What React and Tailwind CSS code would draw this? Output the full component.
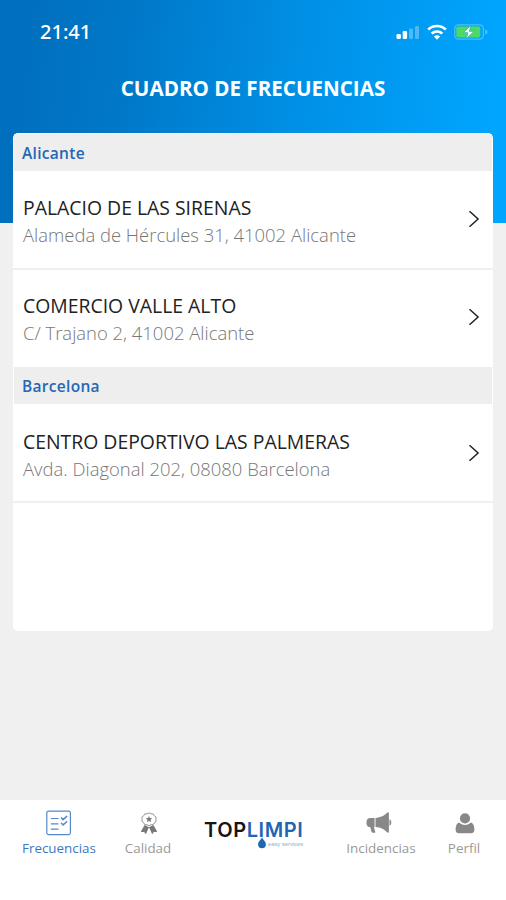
const GROUPS = [
  {
    city: 'Alicante',
    centers: [
      { name: 'PALACIO DE LAS SIRENAS', address: 'Alameda de Hércules 31, 41002 Alicante', pad: 'pt-[3px]' },
      { name: 'COMERCIO VALLE ALTO', address: 'C/ Trajano 2, 41002 Alicante', pad: 'pt-[1px]' },
    ],
  },
  {
    city: 'Barcelona',
    centers: [
      { name: 'CENTRO DEPORTIVO LAS PALMERAS', address: 'Avda. Diagonal 202, 08080 Barcelona', pad: 'pt-[5px]' },
    ],
  },
]

function SignalIcon() {
  return (
    <svg width="24" height="16" viewBox="0 0 24 16" fill="#fff">
      <rect x="0.5" y="10" width="4.4" height="5" rx="1.2" />
      <rect x="6.7" y="7" width="4.4" height="8" rx="1.2" />
      <rect x="13" y="4.5" width="4" height="10.5" rx="1.2" opacity="0.3" />
      <rect x="19" y="2" width="4" height="13" rx="1.2" opacity="0.3" />
    </svg>
  )
}

function WifiIcon() {
  return (
    <svg width="20" height="16" viewBox="0 0 20 16" fill="none" stroke="#fff" strokeWidth="2.7">
      <path d="M1.2 5.6a12.6 12.6 0 0 1 17.6 0" />
      <path d="M4.7 9.6a7.7 7.7 0 0 1 10.6 0" />
      <path d="M10 15.7 6.9 12.5a4.4 4.4 0 0 1 6.2 0z" fill="#fff" stroke="none" />
    </svg>
  )
}

function BatteryIcon() {
  return (
    <svg width="34" height="16" viewBox="0 0 34 16">
      <rect x="0.8" y="0.8" width="28.6" height="14.4" rx="3.6" fill="none" stroke="#fff" strokeOpacity="0.3" strokeWidth="1.2" />
      <path d="M31.2 5.6c1.7.5 2.4 1.3 2.4 2.4s-.7 1.9-2.4 2.4z" fill="#fff" opacity="0.3" />
      <rect x="2.3" y="2.4" width="24" height="11.2" rx="1.8" fill="#4cd964" />
      <path d="M16.8 1.5 9.4 8.7h4.5l-1.6 6 7.9-7.4h-4.8z" fill="#fff" stroke="#24b4cc" strokeWidth="0.8" />
    </svg>
  )
}

function ChecklistIcon() {
  return (
    <svg width="26" height="26" viewBox="0 0 26 26" fill="none" stroke="#5689c9" strokeWidth="1.2" strokeLinecap="round">
      <rect x="0.8" y="1.2" width="23.6" height="23.4" rx="1.8" />
      <path d="M5.3 8.5h6.8M5.3 13.8h6.8M5.3 19.2h6.8" />
      <path d="m15.5 7.9 1.6 1.7 3.6-3.2M15.5 13.2l1.6 1.7 3.6-3.2" strokeWidth="1.5" />
    </svg>
  )
}

function RosetteIcon() {
  return (
    <svg className="ml-px" width="18" height="22" viewBox="0 0 18 22" fill="none" stroke="#777" strokeWidth="1">
      <path d="M5 13.2 1.4 19.6l3-.3 1.2 2.2 3-6.4M13 13.2l3.6 6.4-3-.3-1.2 2.2-3-6.4" fill="#777" />
      <path
        d="m9 .9 2 1 2.2 0 1.1 1.9 1.8 1.3-.2 2.2.2 2.2-1.8 1.3-1.1 1.9-2.2 0-2 1-2-1-2.2 0-1.1-1.9-1.8-1.3.2-2.2-.2-2.2 1.8-1.3 1.1-1.9 2.2 0z"
        fill="#fff"
        stroke="#8a8a8a"
        strokeWidth="0.9"
      />
      <path d="m9 4 .9 2.1 2.4.2-1.8 1.5.6 2.3L9 8.900l-2.100 1.200.6-2.300-1.800-1.500 2.400-.2z" fill="#777" stroke="none" />
    </svg>
  )
}

function MegaphoneIcon() {
  return (
    <svg className="-ml-[5px]" width="26" height="22" viewBox="0 0 26 22" fill="#888">
      <path d="M4.2 6h4.4v9H7.9l1.5 5.6c-1.8.6-3.7.2-4.1-1.3L4.2 15H3.4C1.5 15 .4 13 .4 10.5S1.8 6 4.2 6z" />
      <path d="M9.5 6C14.5 5.8 18.8 3.4 21.3.6h1.6v19.8h-1.6c-2.5-2.9-6.8-5.3-11.8-5.5z" />
      <path d="M23.5 7.3c1.3.5 1.8 1.6 1.8 3.2s-.5 2.7-1.8 3.2z" />
    </svg>
  )
}

function PersonIcon() {
  return (
    <svg className="ml-[2px]" width="20" height="21" viewBox="0 0 20 21" fill="#888">
      <circle cx="10" cy="5.4" r="5.1" />
      <path d="M4.2 9.6C5.5 11.2 7.6 12 10 12s4.5-.8 5.8-2.4c2.3.7 3.6 3.2 3.6 7.1 0 2.3-1.4 3.6-3.6 3.6H4.2C2 20.3.6 19 .6 16.7.6 12.8 1.9 10.3 4.2 9.6z" />
    </svg>
  )
}

function Chevron() {
  return (
    <svg className="shrink-0" width="12" height="18" viewBox="0 0 12 18" fill="none" stroke="#222" strokeWidth="1.5">
      <path d="m1.5 1.2 8.6 7.8-8.6 7.8" />
    </svg>
  )
}

function Tab({ label, icon, active, className = '' }) {
  return (
    <button type="button" className={`flex flex-col items-center ${active ? 'text-[#3c77c2]' : 'text-[#999]'} ${className}`}>
      <span className="flex h-[26px] items-center">{icon}</span>
      <span className="mt-[3px] text-[13.4px] leading-[18px] whitespace-nowrap">{label}</span>
    </button>
  )
}

function Logo() {
  return (
    <div className="mt-[10px] flex w-[100px] flex-col">
      <div className="font-['Inter',sans-serif] text-[20px] leading-[20px] font-semibold tracking-[0.6px] whitespace-nowrap text-[#151515]">
        TOP<span className="text-[#1f66b5]">LIMPI</span>
      </div>
      <div className="-mt-[3px] flex items-start pl-[53px]">
        <svg className="shrink-0" width="10" height="12" viewBox="0 0 10 12" fill="#1f66b5">
          <path d="M5 .3c.8 2.2 3.9 4.200 3.900 7A3.900 3.900 0 0 1 1.100 7.300C1.100 4.500 4.200 2.500 5 .3z" />
        </svg>
        <span className="mt-[4px] ml-[1px] font-['Liberation_Sans',sans-serif] text-[6px] leading-[7px] tracking-[-0.1px] whitespace-nowrap text-[#8eb0d8]">
          easy services
        </span>
      </div>
    </div>
  )
}

export default function App() {
  return (
    <div className="flex h-[900px] w-[506px] flex-col overflow-hidden bg-[#f0f0f0] font-['Open_Sans',sans-serif]">
      <header className="h-[223px] shrink-0 bg-[linear-gradient(97deg,#006fbd_4%,#0078c8_25%,#0090e6_58%,#00a5fe_95%)] text-white">
        <div className="flex h-[64px] items-center justify-between pr-[18px] pl-[40px]">
          <span className="font-['Noto_Sans',sans-serif] text-[20px] font-medium">21:41</span>
          <div className="flex items-center gap-[7px]">
            <SignalIcon />
            <WifiIcon />
            <BatteryIcon />
          </div>
        </div>
        <h1 className="pt-[10px] text-center text-[20.6px] leading-[28px] font-bold">CUADRO DE FRECUENCIAS</h1>
      </header>

      <main className="z-10 mx-[13px] -mt-[90px] h-[498px] shrink-0 overflow-hidden rounded-[5px] bg-white">
        {GROUPS.map(group => (
          <section key={group.city}>
            <h2 className="mx-px mt-px flex h-[37px] items-center bg-[#eee] px-2 pt-[3px] text-[15.5px] font-semibold tracking-[0.3px] text-[#2567b5]">
              {group.city}
            </h2>
            {group.centers.map((center, i) => (
              <div
                key={center.name}
                className={`flex items-center justify-between pr-[13px] pl-[10px] ${center.pad} ${i === 1 ? 'h-[96px]' : 'h-[99px] border-b-2 border-[#f0f0f0]'}`}
              >
                <div>
                  <p className="text-[19.4px] leading-[27px] text-[#222]">{center.name}</p>
                  <p className="text-[18.45px] leading-[27px] font-light text-[#777]">{center.address}</p>
                </div>
                <div className="-mt-[4px]">
                  <Chevron />
                </div>
              </div>
            ))}
          </section>
        ))}
      </main>

      <nav className="mt-auto flex h-[100px] shrink-0 items-start bg-white pt-[10px] pl-[22px]">
        <Tab label="Frecuencias" icon={<ChecklistIcon />} active className="w-[74px]" />
        <Tab label="Calidad" icon={<RosetteIcon />} className="ml-[28px] w-[48px]" />
        <div className="ml-[32px]">
          <Logo />
        </div>
        <Tab label="Incidencias" icon={<MegaphoneIcon />} className="ml-[42px] w-[70px]" />
        <Tab label="Perfil" icon={<PersonIcon />} className="ml-[31px] w-[34px]" />
      </nav>
    </div>
  )
}
